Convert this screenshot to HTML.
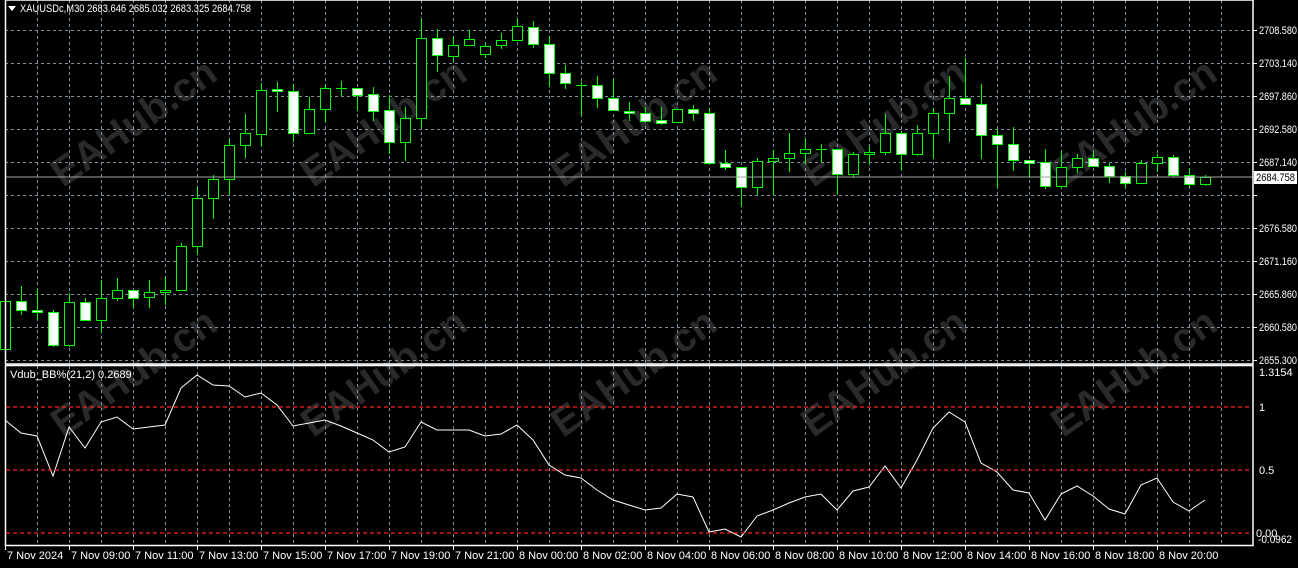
<!DOCTYPE html>
<html><head><meta charset="utf-8"><style>
html,body{margin:0;padding:0;background:#000;width:1298px;height:568px;overflow:hidden}
svg{display:block}
text{font-family:"Liberation Sans",sans-serif;font-size:11px;fill:#fff}
.wm{font-size:40px;font-weight:bold;fill:#2a2a2a}
</style></head><body>
<svg id="s" width="1298" height="568" xmlns="http://www.w3.org/2000/svg">
<g id="wm"></g>
<g id="grid"></g>
<g id="cand"></g>
<line x1="5" y1="177" x2="1253" y2="177" stroke="#a0a0a0" stroke-width="1"/>
<polyline id="ind" fill="none" stroke="#fff" stroke-width="1"/>
<g stroke="#fff" stroke-width="1.5" fill="none">
<rect x="5.5" y="0" width="1247.5" height="364"/>
<rect x="5.5" y="365.5" width="1247.5" height="180"/>
</g>
<g id="lbl"></g>
<polygon points="8,6 16,6 12,11" fill="#fff"/>
<text x="20" y="12" textLength="231" lengthAdjust="spacingAndGlyphs">XAUUSDc,M30  2683.646 2685.032 2683.325 2684.758</text>
<text x="10" y="378">Vdub_BB%(21,2) 0.2689</text>
<rect x="1254" y="171" width="43" height="13" fill="#fff"/>
<text x="1256" y="181" style="fill:#000" textLength="39" lengthAdjust="spacingAndGlyphs">2684.758</text>
</svg>
<script>
var NS="http://www.w3.org/2000/svg";
function el(p,t,a,tx){var e=document.createElementNS(NS,t);for(var k in a)e.setAttribute(k,a[k]);if(tx)e.textContent=tx;document.getElementById(p).appendChild(e);return e;}
[[120,130],[370,130],[620,130],[870,130],[1120,130],[120,380],[370,380],[620,380],[870,380],[1120,380]].forEach(function(p){
 el("wm","text",{x:p[0]-80,y:p[1]+15,"class":"wm",transform:"rotate(-35 "+p[0]+" "+p[1]+")"},"EAHub.cn");});
for(var x=37;x<1253;x+=32){el("grid","line",{x1:x+.5,y1:0,x2:x+.5,y2:364,stroke:"#8090a0","stroke-dasharray":"3,3"});
 el("grid","line",{x1:x+.5,y1:366,x2:x+.5,y2:545,stroke:"#8090a0","stroke-dasharray":"3,3"});}
var prices=["2708.580","2703.140","2697.860","2692.580","2687.140","2681.860","2676.580","2671.160","2665.860","2660.580","2655.300"];
for(var i=0;i<11;i++){var y=30+33*i;el("grid","line",{x1:5,y1:y+.5,x2:1253,y2:y+.5,stroke:"#8090a0","stroke-dasharray":"3,3"});
 el("lbl","line",{x1:1253,y1:y+.5,x2:1257,y2:y+.5,stroke:"#fff"});
 if(i!=5)el("lbl","text",{x:1259,y:y+4,textLength:38,lengthAdjust:"spacingAndGlyphs"},prices[i]);}
[407,470,533].forEach(function(y){el("lbl","line",{x1:6,y1:y,x2:1252,y2:y,stroke:"#ff2020","stroke-width":1.2,"stroke-dasharray":"4,3"});});
el("lbl","text",{x:1259,y:376},"1.3154");
el("lbl","text",{x:1259,y:411},"1");
el("lbl","text",{x:1259,y:474},"0.5");
el("lbl","text",{x:1256,y:537},"0.00");
el("lbl","text",{x:1258,y:543,textLength:34,lengthAdjust:"spacingAndGlyphs"},"-0.0962");
var tl=["7 Nov 2024","7 Nov 09:00","7 Nov 11:00","7 Nov 13:00","7 Nov 15:00","7 Nov 17:00","7 Nov 19:00","7 Nov 21:00","8 Nov 00:00","8 Nov 02:00","8 Nov 04:00","8 Nov 06:00","8 Nov 08:00","8 Nov 10:00","8 Nov 12:00","8 Nov 14:00","8 Nov 16:00","8 Nov 18:00","8 Nov 20:00"];
tl.forEach(function(t,i){var x=5+64*i;el("lbl","line",{x1:x+.5,y1:545,x2:x+.5,y2:550,stroke:"#fff"});el("lbl","text",{x:x+2,y:559},t);});
var C=[[283,354,301,349,0],[286,315,301,310,1],[289,320,310,312,1],[310,347,312,345,1],[293,347,302,345,0],[298,321,302,320,1],[280,333,298,320,0],[278,301,290,298,0],[290,308,290,298,1],[280,308,292,297,0],[277,305,290,292,0],[243,290,246,290,0],[187,255,198,246,0],[175,219,179,198,0],[139,195,145,179,0],[114,158,133,145,0],[83,146,90,134,0],[82,112,89,91,1],[84,142,91,133,1],[97,133,109,133,0],
[85,122,88,109,0],[81,96,88,88,0],[88,111,88,95,1],[87,121,94,111,1],[95,154,110,142,1],[107,161,118,142,0],[18,128,38,118,0],[29,72,38,55,1],[37,62,45,56,0],[30,45,39,45,0],[43,58,46,54,0],[33,49,40,45,0],[18,40,26,40,0],[21,48,27,44,1],[36,87,44,73,1],[65,89,73,83,1],[82,116,85,85,0],[76,108,85,98,1],[79,110,98,110,1],[102,121,111,113,1],
[107,121,113,121,1],[107,125,120,123,1],[109,123,109,122,0],[105,121,109,113,1],[108,165,113,163,1],[150,170,163,167,1],[167,207,167,187,1],[158,195,161,187,0],[150,195,158,161,0],[133,172,153,158,0],[138,164,149,153,0],[144,163,149,149,0],[149,195,149,174,1],[152,178,154,174,0],[147,165,152,154,0],[114,155,133,152,0],[131,170,133,154,1],[125,156,133,154,0],[108,159,113,133,0],[76,142,98,113,0],
[58,104,98,104,1],[84,159,104,135,1],[129,188,135,144,1],[127,171,144,160,1],[160,178,160,163,1],[149,189,162,186,1],[151,188,167,186,0],[154,173,158,167,0],[151,167,158,166,1],[163,183,166,176,1],[172,188,176,183,1],[160,183,163,183,0],[154,172,157,163,0],[155,177,157,175,1],[168,188,175,184,1],[175,186,177,184,0]];
C.forEach(function(c,i){var x=5+16*i;
 el("cand","line",{x1:x+.5,y1:c[0],x2:x+.5,y2:c[1],stroke:"#00ff00"});
 var h=c[3]-c[2];
 if(h<1){el("cand","line",{x1:x-5,y1:c[2]+.5,x2:x+6,y2:c[2]+.5,stroke:"#00ff00"});}
 else el("cand","rect",{x:x-4.5,y:c[2]+.5,width:10,height:h,fill:c[4]?"#fff":"#000",stroke:"#00ff00"});});
var I=[420,433,436,476,427,448,422,417,429,427,425,388,375,385,386,397,393,405,426,423,420,426,433,440,452,447,422,430,430,430,436,434,425,440,465,475,478,490,500,505,510,508,494,497,532,529,537,516,510,503,497,494,510,491,487,466,488,460,428,412,422,463,472,490,493,520,494,486,496,509,514,485,478,502,511,500];
document.getElementById("ind").setAttribute("points",I.map(function(y,i){return (5+16*i)+","+y;}).join(" "));
</script>
</body></html>
